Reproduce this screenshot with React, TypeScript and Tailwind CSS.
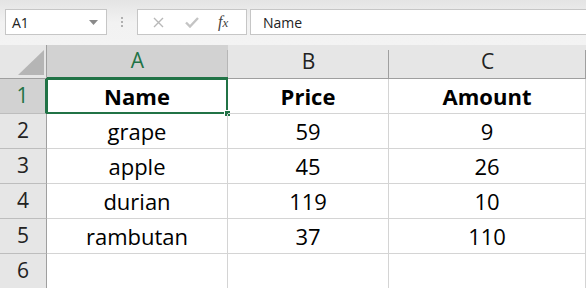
import React from "react";

const rows = [
  ["Name", "Price", "Amount"],
  ["grape", "59", "9"],
  ["apple", "45", "26"],
  ["durian", "119", "10"],
  ["rambutan", "37", "110"],
  ["", "", ""],
];

const font = { fontFamily: '"Open Sans", "Noto Sans", sans-serif' };

export default function App() {
  return (
    <div className="w-[586px] h-[288px] overflow-hidden bg-white" style={font}>
      {/* formula bar */}
      <div className="h-[45px] bg-gradient-to-b from-[#e4e4e4] via-[#f2f2f2] to-[#f3f3f3] flex items-start pt-[9px] pl-[5px]">
        <div className="w-[102px] h-[26px] bg-white border border-[#c6c6c6] flex items-center justify-between pl-[6px] pr-[8px]">
          <span className="text-[14px] text-[#222]">A1</span>
          <svg width="9" height="5" viewBox="0 0 9 5">
            <path d="M0 0 H9 L4.5 5 Z" fill="#8a8a8a" />
          </svg>
        </div>
        <div className="w-[30px] h-[26px] flex flex-col items-center justify-center gap-[2px]">
          <span className="w-[2px] h-[2px] bg-[#b0b0b0]" />
          <span className="w-[2px] h-[2px] bg-[#b0b0b0]" />
          <span className="w-[2px] h-[2px] bg-[#b0b0b0]" />
        </div>
        <div className="w-[110px] h-[26px] bg-white border border-[#c6c6c6] flex items-center">
          <svg className="ml-[15px]" width="11" height="11" viewBox="0 0 11 11">
            <path d="M1 1 L10 10 M10 1 L1 10" stroke="#b8b8b8" strokeWidth="1.4" />
          </svg>
          <svg className="ml-[21px]" width="14" height="11" viewBox="0 0 14 11">
            <path d="M1 5.5 L5 9.5 L13 1" stroke="#c4c4c4" strokeWidth="2.4" fill="none" />
          </svg>
          <span className="ml-[19px] text-[16px] italic text-[#444] leading-none" style={{ fontFamily: '"Liberation Serif", serif' }}>
            f<span className="text-[13px]">x</span>
          </span>
        </div>
        <div className="ml-[3px] flex-1 h-[26px] bg-white border-y border-l border-[#c6c6c6] flex items-center pl-[12px]">
          <span className="text-[14px] text-[#222]">Name</span>
        </div>
      </div>

      {/* sheet */}
      <div className="grid grid-cols-[47px_181px_161px_197px]">
        {/* column headers */}
        <div className="h-[34px] bg-[#e6e6e6] border-r border-b border-[#9f9f9f] relative">
          <svg className="absolute left-[18px] top-[5px]" width="26" height="25" viewBox="0 0 26 25">
            <path d="M26 0 V25 H0 Z" fill="#b5b5b5" />
          </svg>
        </div>
        {["A", "B", "C"].map((c, i) => (
          <div
            key={c}
            className={`h-[34px] border-b flex items-center justify-center text-[21px] relative ${
              i === 0 ? "bg-[#d2d2d2] text-[#217346] border-[#217346] border-b-2" : "bg-[#e6e6e6] text-[#222] border-[#9f9f9f]"
            }`}
          >
            {c}
            <span className={`absolute right-0 top-[5px] bottom-0 w-px ${i === 0 ? "bg-[#b6b6b6]" : "bg-[#9f9f9f]"}`} />
          </div>
        ))}

        {rows.map((r, ri) => (
          <React.Fragment key={ri}>
            <div
              className={`h-[35px] border-r border-b flex items-center justify-center text-[21px] ${
                ri === 0 ? "bg-[#d2d2d2] text-[#217346] border-r-[#217346] border-r-2 border-b-[#bdbdbd]" : "bg-[#e6e6e6] text-[#222] border-r-[#9f9f9f] border-b-[#bdbdbd]"
              }`}
            >
              {ri + 1}
            </div>
            {r.map((v, ci) => (
              <div
                key={ci}
                className={`h-[35px] border-r border-b border-[#d4d4d4] flex items-center justify-center text-[22px] text-black relative pt-px ${
                  ri === 0 ? "font-bold" : ""
                }`}
              >
                {v}
                {ri === 0 && ci === 0 && (
                  <>
                    <span className="absolute -top-px -left-px -right-px -bottom-px border-2 border-[#217346]" />
                    <span className="absolute -right-[4px] -bottom-[4px] w-[7px] h-[7px] bg-[#217346] border border-white" />
                  </>
                )}
              </div>
            ))}
          </React.Fragment>
        ))}
      </div>
    </div>
  );
}
